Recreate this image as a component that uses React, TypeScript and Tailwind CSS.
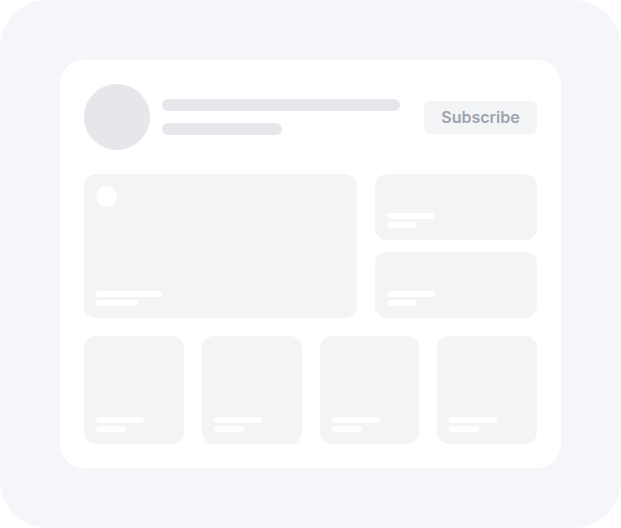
import React from "react";

function SmallCard({ h }: { h: string }) {
  return (
    <div className={`flex flex-col justify-end gap-[3px] rounded-xl bg-[#f3f4f6] p-3 ${h}`}>
      <div className="h-[6px] w-[48px] rounded-full bg-white" />
      <div className="h-[6px] w-[30px] rounded-full bg-white" />
    </div>
  );
}

export default function App() {
  return (
    <div
      className="w-[621px] h-[528px] rounded-[48px] bg-[#f5f6fa] p-[60px]"
      style={{ fontFamily: "Inter, 'Liberation Sans', sans-serif" }}
    >
      <div className="flex h-[408px] w-[501px] flex-col rounded-3xl bg-white p-6">
        <div className="flex items-center">
          <div className="h-[66px] w-[66px] shrink-0 rounded-full bg-[#e5e7eb]" />
          <div className="ml-3 flex flex-col gap-3">
            <div className="h-3 w-[238px] rounded-full bg-[#e5e7eb]" />
            <div className="h-3 w-[120px] rounded-full bg-[#e5e7eb]" />
          </div>
          <div className="ml-auto flex h-[33px] w-[113px] items-center justify-center rounded-md bg-[#f3f4f6] text-base font-semibold text-[#9ca3af]">
            Subscribe
          </div>
        </div>
        <div className="mt-6 flex gap-[18px]">
          <div className="flex h-[144px] w-[273px] flex-col justify-between rounded-xl bg-[#f3f4f6] p-3">
            <div className="h-[21px] w-[21px] rounded-full bg-white" />
            <div className="flex flex-col gap-[3px]">
              <div className="h-[6px] w-[66px] rounded-full bg-white" />
              <div className="h-[6px] w-[42px] rounded-full bg-white" />
            </div>
          </div>
          <div className="flex flex-1 flex-col gap-3">
            <SmallCard h="h-[66px]" />
            <SmallCard h="h-[66px]" />
          </div>
        </div>
        <div className="mt-[18px] grid grid-cols-4 gap-[18px]">
          <SmallCard h="h-[108px]" />
          <SmallCard h="h-[108px]" />
          <SmallCard h="h-[108px]" />
          <SmallCard h="h-[108px]" />
        </div>
      </div>
    </div>
  );
}
